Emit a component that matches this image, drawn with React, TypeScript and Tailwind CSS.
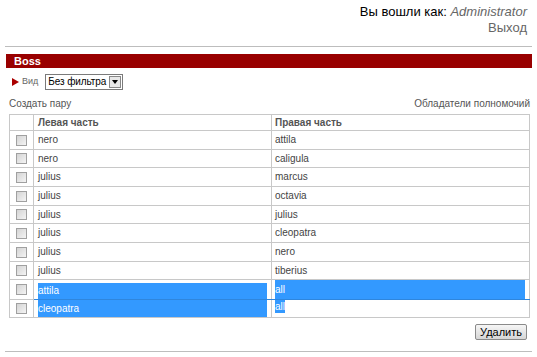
import React from "react";

const rows: { l: string; r: string; h: string }[] = [
  { l: "nero", r: "attila", h: "h-[19px]" },
  { l: "nero", r: "caligula", h: "h-[18px]" },
  { l: "julius", r: "marcus", h: "h-[19px]" },
  { l: "julius", r: "octavia", h: "h-[19px]" },
  { l: "julius", r: "julius", h: "h-[18px]" },
  { l: "julius", r: "cleopatra", h: "h-[19px]" },
  { l: "julius", r: "nero", h: "h-[19px]" },
  { l: "julius", r: "tiberius", h: "h-[18px]" },
];

function Check() {
  return (
    <div className="mx-auto w-[11px] h-[11px] border border-[#a0a0a0] bg-gradient-to-br from-[#d4d4d4] to-[#f4f4f4]" />
  );
}

export default function App() {
  return (
    <div
      className="w-[537px] h-[357px] bg-white overflow-hidden text-[#444]"
      style={{ fontFamily: '"Liberation Sans", Arial, sans-serif' }}
    >
      <div className="pt-[4px] pr-[10px] text-right text-[13px] leading-[16px]">
        <div className="text-black">
          Вы вошли как: <span className="italic text-[#666]">Administrator</span>
        </div>
        <div className="text-[#666]">Выход</div>
      </div>
      <div className="mt-[10px] mx-[5px] h-[1px] bg-[#bdbdbd]" />
      <div className="mt-[7px] ml-[6px] mr-[5px] h-[14px] bg-[#990000] pl-[8px] text-white font-bold text-[11px] leading-[14px]">
        Boss
      </div>
      <div className="mt-[6px] flex items-center h-[16px]">
        <div className="ml-[12px] w-0 h-0 border-y-[4px] border-y-transparent border-l-[7px] border-l-[#aa0000]" />
        <span className="ml-[3px] text-[9px] text-[#666]">Вид</span>
        <div className="ml-[7px] w-[78px] h-[16px] border border-[#7a7a7a] flex items-center bg-white">
          <span className="pl-[2px] text-[10px] tracking-[-0.1px] text-black flex-1 leading-[14px] whitespace-nowrap">Без фильтра</span>
          <div className="shrink-0 mr-[1px] w-[12px] h-[12px] border border-[#888] bg-[#e8e8e8] flex items-center justify-center">
            <div className="w-0 h-0 border-x-[3px] border-x-transparent border-t-[4px] border-t-black" />
          </div>
        </div>
      </div>
      <div className="mt-[7px] flex justify-between pl-[9px] pr-[7px] text-[10px] leading-[14px] text-[#555]">
        <span>Создать пару</span>
        <span>Обладатели полномочий</span>
      </div>
      <table className="mt-[3px] ml-[9px] w-[521px] border-collapse text-[10px] leading-[12px] table-fixed">
        <colgroup>
          <col className="w-[24px]" />
          <col className="w-[238px]" />
          <col />
        </colgroup>
        <thead>
          <tr className="h-[16px]">
            <th className="border border-[#c8c8c8]" />
            <th className="border border-[#c8c8c8] text-left pl-[4px] font-bold text-[#555]">Левая часть</th>
            <th className="border border-[#c8c8c8] text-left pl-[3px] font-bold text-[#555]">Правая часть</th>
          </tr>
        </thead>
        <tbody>
          {rows.map((r, i) => (
            <tr key={i} className={r.h}>
              <td className="border border-[#c8c8c8] p-0">
                <Check />
              </td>
              <td className="border border-[#c8c8c8] pl-[4px] p-0">{r.l}</td>
              <td className="border border-[#c8c8c8] pl-[3px] p-0">{r.r}</td>
            </tr>
          ))}
          <tr className="h-[19px]">
            <td className="border border-[#c8c8c8] p-0">
              <Check />
            </td>
            <td className="border border-[#c8c8c8] border-b-[#2f86dd] p-0 pl-[4px] pr-[4px] align-bottom">
              <div className="h-[16px] bg-[#3399ff] text-white leading-[16px]">attila</div>
            </td>
            <td className="border border-[#c8c8c8] border-b-[#2f86dd] p-0 pl-[3px] pr-[4px]">
              <div className="h-[19px] bg-[#3399ff] text-white leading-[19px]">all</div>
            </td>
          </tr>
          <tr className="h-[18px]">
            <td className="border border-[#c8c8c8] p-0">
              <Check />
            </td>
            <td className="border border-[#c8c8c8] p-0 pl-[4px] pr-[4px] align-top">
              <div className="h-[17px] bg-[#3399ff] text-white leading-[17px]">cleopatra</div>
            </td>
            <td className="border border-[#c8c8c8] p-0 pl-[3px] align-top">
              <span className="bg-[#3399ff] text-white leading-[13px] inline-block">all</span>
            </td>
          </tr>
        </tbody>
      </table>
      <div className="mt-[6px] flex justify-end pr-[10px]">
        <button className="h-[16px] px-[4px] border border-[#8a8a8a] rounded-[2px] bg-gradient-to-b from-[#f6f6f6] to-[#d6d6d6] text-[11px] leading-[14px] text-black">
          Удалить
        </button>
      </div>
      <div className="mt-[11px] mx-[5px] h-[1px] bg-[#bdbdbd]" />
    </div>
  );
}
